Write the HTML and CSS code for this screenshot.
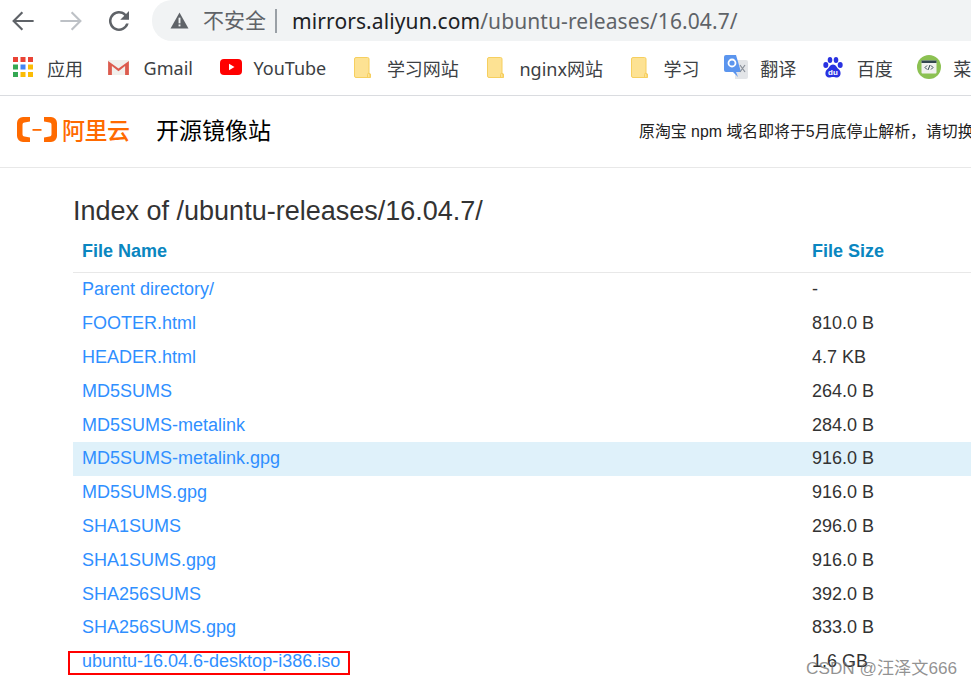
FILE: index.html
```html
<!DOCTYPE html>
<html lang="en">
<head>
    <meta charset="UTF-8">
    <title>Index of /ubuntu-releases/16.04.7/</title>
    <link rel="stylesheet" href="styles.css">
</head>
<body>
    <div class="toolbar">
        <div class="nav-buttons">
            <svg class="nav-icon" viewBox="0 0 24 24"><path d="M20.500 12H4.500m7-7-7 7 7 7" fill="none" stroke="#5f6368" stroke-width="1.700"/></svg>
            <svg class="nav-icon" viewBox="0 0 24 24"><path d="M3.500 12h16m-7-7 7 7-7 7" fill="none" stroke="#bdc1c6" stroke-width="1.700"/></svg>
            <svg class="nav-icon" viewBox="0 0 24 24"><path d="M17.650 6.350A8 8 0 1 0 19.730 14h-2.080A6 6 0 1 1 12 6c1.660 0 3.140.690 4.220 1.780L13 11h7V4z" fill="#5f6368"/></svg>
        </div>
        <div class="address-bar">
            <svg class="warn-icon" viewBox="0 0 20 18"><path d="M10 0.500 19.500 17.500H.5z" fill="#5f6368"/><rect x="9" y="6" width="2" height="6" fill="#f1f3f4"/><rect x="9" y="13.200" width="2" height="2" fill="#f1f3f4"/></svg>
            <span class="not-secure">不安全</span>
            <span class="divider"></span>
            <span class="url"><b>mirrors.aliyun.com</b>/ubuntu-releases/16.04.7/</span>
        </div>
    </div>

    <div class="bookmarks">
        <div class="bookmark">
            <svg class="bm-icon" viewBox="0 0 20 20">
                <g fill="#ea4335"><rect x="0" y="0" width="5" height="5"/><rect x="7.500" y="0" width="5" height="5"/><rect x="15" y="0" width="5" height="5"/></g>
                <rect x="0" y="7.500" width="5" height="5" fill="#34a853"/><rect x="7.500" y="7.500" width="5" height="5" fill="#4285f4"/><rect x="15" y="7.500" width="5" height="5" fill="#fbbc05"/>
                <rect x="0" y="15" width="5" height="5" fill="#34a853"/><rect x="7.500" y="15" width="5" height="5" fill="#fbbc05"/><rect x="15" y="15" width="5" height="5" fill="#fbbc05"/>
            </svg>
            <span>应用</span>
        </div>
        <div class="bookmark">
            <svg class="bm-icon gmail" viewBox="0 0 24 18">
                <rect x="1" y="1" width="22" height="16" fill="#f1efec"/>
                <path d="M1 17V2l11 8 11-8v15h-4V7.500L12 13 5 7.500V17z" fill="#dc5b4e"/>
            </svg>
            <span>Gmail</span>
        </div>
        <div class="bookmark">
            <svg class="bm-icon youtube" viewBox="0 0 22 16">
                <rect width="22" height="16" rx="4" fill="#f00"/>
                <path d="M9 4.800 14.500 8 9 11.200z" fill="#fff"/>
            </svg>
            <span>YouTube</span>
        </div>
        <div class="bookmark">
            <svg class="bm-icon folder" viewBox="0 0 17 21"><use href="#folder-shape"/></svg>
            <span>学习网站</span>
        </div>
        <div class="bookmark">
            <svg class="bm-icon folder" viewBox="0 0 17 21"><use href="#folder-shape"/></svg>
            <span>nginx网站</span>
        </div>
        <div class="bookmark">
            <svg class="bm-icon folder" viewBox="0 0 17 21"><use href="#folder-shape"/></svg>
            <span>学习</span>
        </div>
        <div class="bookmark">
            <svg class="bm-icon translate" viewBox="0 0 24 24">
                <path d="M11 5h11a2 2 0 0 1 2 2v15a2 2 0 0 1-2 2H11z" fill="#e3e5e8"/>
                <path d="M2 0h10l5 17h-5l2 5-5-5H2a2 2 0 0 1-2-2V2a2 2 0 0 1 2-2z" fill="#5b95ee"/>
                <circle cx="8" cy="8" r="3.500" fill="none" stroke="#fff" stroke-width="1.800"/>
                <path d="m16 10 5 7m0-7-5 7" stroke="#8a9099" stroke-width="1.200"/>
            </svg>
            <span>翻译</span>
        </div>
        <div class="bookmark">
            <svg class="bm-icon baidu" viewBox="0 0 20 21">
                <g fill="#2932e1">
                    <ellipse cx="2.800" cy="8" rx="2.500" ry="3"/>
                    <ellipse cx="7" cy="3" rx="2.300" ry="3"/>
                    <ellipse cx="13" cy="3" rx="2.300" ry="3"/>
                    <ellipse cx="17.200" cy="8" rx="2.500" ry="3"/>
                    <path d="M10 7.500c3 0 3.500 3 6 5 2.800 2.500 1.800 8-2 8-1.500 0-2.500-.6-4-.6s-2.500.6-4 .6c-3.800 0-4.800-5.500-2-8 2.500-2 3-5 6-5z"/>
                </g>
                <text class="baidu-du" x="10" y="18">du</text>
            </svg>
            <span>百度</span>
        </div>
        <div class="bookmark">
            <svg class="bm-icon runoob" viewBox="0 0 24 24">
                <circle cx="12" cy="12" r="12" fill="#8cc152"/>
                <rect x="4.500" y="5.500" width="15" height="13" rx="1" fill="#f1f1ef"/>
                <rect x="4.500" y="5.500" width="15" height="2.500" fill="#33474f"/>
                <path d="m10 10.500-2 2 2 2m4-4 2 2-2 2m-1-4.500-2 5" fill="none" stroke="#33474f" stroke-width="1"/>
            </svg>
            <span>菜鸟教程</span>
        </div>
    </div>

    <svg class="svg-defs" width="0" height="0">
        <symbol id="folder-shape" viewBox="0 0 17 21">
            <path d="M2 .5h11.500a1.500 1.500 0 0 1 1.500 1.500v15h1.500v3.500H2A1.500 1.500 0 0 1 .5 19V2A1.500 1.500 0 0 1 2 .5z" fill="#fde293" stroke="#f6cf5f"/>
            <path d="M13.500 20.500v-3a1.200 1.200 0 0 1 2.500 0v3" fill="none" stroke="#f6cf5f"/>
        </symbol>
    </svg>

    <div class="site-header">
        <div class="logo">
            <svg class="logo-mark" viewBox="0 0 40 25">
                <path d="M13 0H6a6 6 0 0 0-6 6v13a6 6 0 0 0 6 6h7v-4.500L7.500 19.500a2 2 0 0 1-2-2v-10a2 2 0 0 1 2-2L13 4.500zM27 0h7a6 6 0 0 1 6 6v13a6 6 0 0 1-6 6h-7v-4.500l5.500-1a2 2 0 0 0 2-2v-10a2 2 0 0 0-2-2L27 4.500z" fill="#ff6a00"/>
                <rect x="15.500" y="12" width="9" height="1.800" fill="#ff6a00"/>
            </svg>
            <span class="logo-text">阿里云</span>
        </div>
        <span class="site-title">开源镜像站</span>
        <span class="notice">原淘宝 npm 域名即将于5月底停止解析，请切换至新域名</span>
    </div>

    <div class="content">
        <h1>Index of /ubuntu-releases/16.04.7/</h1>
        <table class="listing">
            <thead>
                <tr><th class="col-name">File Name</th><th class="col-size">File Size</th></tr>
            </thead>
            <tbody>
                <tr><td><a href="#">Parent directory/</a></td><td>-</td></tr>
                <tr><td><a href="#">FOOTER.html</a></td><td>810.0 B</td></tr>
                <tr><td><a href="#">HEADER.html</a></td><td>4.7 KB</td></tr>
                <tr><td><a href="#">MD5SUMS</a></td><td>264.0 B</td></tr>
                <tr><td><a href="#">MD5SUMS-metalink</a></td><td>284.0 B</td></tr>
                <tr class="hover"><td><a href="#">MD5SUMS-metalink.gpg</a></td><td>916.0 B</td></tr>
                <tr><td><a href="#">MD5SUMS.gpg</a></td><td>916.0 B</td></tr>
                <tr><td><a href="#">SHA1SUMS</a></td><td>296.0 B</td></tr>
                <tr><td><a href="#">SHA1SUMS.gpg</a></td><td>916.0 B</td></tr>
                <tr><td><a href="#">SHA256SUMS</a></td><td>392.0 B</td></tr>
                <tr><td><a href="#">SHA256SUMS.gpg</a></td><td>833.0 B</td></tr>
                <tr><td><a href="#">ubuntu-16.04.6-desktop-i386.iso</a></td><td>1.6 GB</td></tr>
            </tbody>
        </table>
    </div>

    <div class="red-box"></div>
    <div class="watermark">CSDN @汪泽文666</div>
</body>
</html>
```

FILE: styles.css
```css
html, body {
    margin: 0;
    height: 682px;
    overflow: hidden;
}

body {
    position: relative;
    background: #fff;
    font-family: "Liberation Sans", "Noto Sans CJK SC", sans-serif;
    color: #333;
}

/* browser chrome */
.toolbar {
    display: flex;
    align-items: center;
    height: 41px;
}

.nav-buttons {
    display: flex;
    gap: 18px;
    width: 152px;
    padding-left: 8px;
    box-sizing: border-box;
}

.nav-icon {
    width: 30px;
    height: 30px;
}

.address-bar {
    flex: 1;
    display: flex;
    align-items: center;
    height: 41px;
    padding-left: 18px;
    background: #f1f3f4;
    border-radius: 20px 0 0 20px;
}

.warn-icon {
    width: 19px;
    height: 17px;
    margin-right: 14px;
}

.not-secure {
    font-family: "Noto Sans CJK SC", sans-serif;
    font-size: 21px;
    margin-top: -3px;
    color: #5f6368;
}

.divider {
    width: 2px;
    height: 24px;
    margin: 0 15px 0 9px;
    background: #9aa0a6;
}

.url {
    font-family: "Noto Sans", sans-serif;
    font-size: 21px;
    letter-spacing: 0.1px;
    color: #5f6368;
    white-space: nowrap;
}

.url b {
    font-weight: normal;
    color: #202124;
}

.bookmarks {
    display: flex;
    align-items: center;
    gap: 26.600px;
    height: 54px;
    padding-left: 13px;
    border-bottom: 1px solid #dadce0;
    white-space: nowrap;
    overflow: hidden;
}

.bookmark {
    display: flex;
    align-items: center;
    gap: 14px;
    flex-shrink: 0;
    font-family: "Noto Sans", "Noto Sans CJK SC", sans-serif;
    font-size: 18px;
    color: #3c4043;
}

/* every favicon sits in a 20px slot, the odd sizes just spill out of it */
.bm-icon { width: 20px; height: 20px; margin-top: -2px; }
.bm-icon.gmail { width: 23px; height: 17px; margin-left: -3px; }
.bm-icon.youtube { width: 22px; height: 16px; margin-right: -2px; }
.bm-icon.folder { width: 17px; height: 21px; margin-left: 1.500px; margin-right: 1.500px; }
.bm-icon.translate { width: 24px; height: 24px; margin-left: -2px; margin-right: -2px; }
.bm-icon.baidu { height: 21px; }
.bm-icon.runoob { width: 24px; height: 24px; margin-left: -2px; margin-right: -2px; }

.baidu-du {
    font-family: "Liberation Sans", sans-serif;
    font-size: 8px;
    font-weight: bold;
    fill: #fff;
    text-anchor: middle;
}

.svg-defs {
    display: block;
    height: 0;
}

/* site header */
.site-header {
    display: flex;
    align-items: center;
    height: 71px;
    padding-left: 17px;
    border-bottom: 1px solid #e8e8e8;
    white-space: nowrap;
    overflow: hidden;
}

.logo {
    display: flex;
    align-items: center;
    gap: 5px;
    flex: 0 0 139px;
    margin-top: -4px;
}

.logo-mark {
    width: 40px;
    height: 25px;
}

.logo-text {
    font-family: "Noto Sans CJK SC", sans-serif;
    font-size: 23px;
    letter-spacing: -0.5px;
    font-weight: 500;
    color: #ff6a00;
    line-height: 27px;
}

.site-title {
    font-family: "Noto Sans CJK SC", sans-serif;
    font-size: 23px;
    line-height: 30px;
    color: #000;
    flex: 0 0 483px;
    margin-top: -6px;
}

.notice {
    font-size: 15.900px;
    margin-top: -2px;
    color: #222;
    flex-shrink: 0;
}

/* listing */
.content {
    padding-left: 73px;
}

h1 {
    margin: 25px 0 0;
    font-size: 27px;
    font-weight: normal;
    line-height: 36px;
    color: #333;
}

.listing {
    width: 1100px;
    border-collapse: collapse;
    margin-top: 5px;
    font-size: 18px;
}

.listing th {
    height: 34px;
    padding: 0 9px 4px;
    text-align: left;
    font-weight: bold;
    color: #0a86c0;
    border-bottom: 1px solid #e8e8e8;
}

.col-name {
    width: 712px;
}

.listing td {
    height: 33.800px;
    padding: 0 9px;
    color: #333;
}

.listing a {
    color: #2f8fff;
    text-decoration: none;
}

.listing .hover td {
    background: #dff1fa;
}

/* marks added on top of the screenshot */
.red-box {
    position: absolute;
    left: 68px;
    top: 651px;
    width: 278px;
    height: 20px;
    border: 2px solid #f00;
}

.watermark {
    position: absolute;
    left: 806px;
    top: 654px;
    font-size: 17.200px;
    color: rgba(110, 110, 110, 0.75);
    white-space: nowrap;
}
```
